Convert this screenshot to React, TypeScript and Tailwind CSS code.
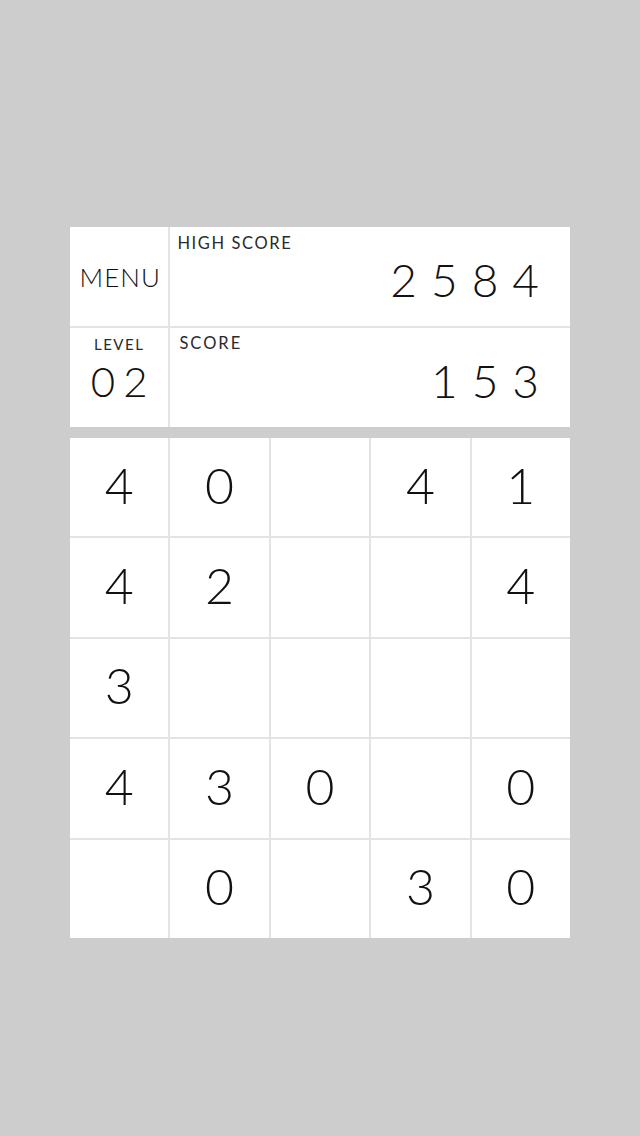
import React from 'react';

const board: (number | null)[][] = [
  [4, 0, null, 4, 1],
  [4, 2, null, null, 4],
  [3, null, null, null, null],
  [4, 3, 0, null, 0],
  [null, 0, null, 3, 0],
];

const App: React.FC = () => {
  return (
    <div className="min-h-[1136px] w-full bg-[#cdcdcd] pt-[227px] text-[#111]" style={{ fontFamily: 'Lato, "Open Sans", sans-serif' }}>
      <div className="mx-auto w-[500px]">
        {/* Score panel */}
        <div className="grid h-[200px] grid-cols-5 grid-rows-2 gap-[2px] bg-[#e4e4e4]">
          <div className="flex items-center justify-center bg-white pl-[2px] text-[26px] font-light leading-none tracking-[1px]">MENU</div>
          <div className="col-span-4 flex flex-col bg-white pl-[7px] pr-[17px] pt-[6px]">
            <div className="text-[16.5px] leading-5 tracking-[1.6px] text-[#2a2a2a]">HIGH SCORE</div>
            <div className="mt-[4px] text-right text-[46px] font-light leading-none tracking-[14px]">2584</div>
          </div>
          <div className="flex flex-col items-center bg-white pt-[6px]">
            <div className="text-[15px] leading-5 tracking-[1.5px] text-[#2a2a2a]">LEVEL</div>
            <div className="mt-[6px] pl-[8px] text-[42px] font-light leading-none tracking-[8px]">02</div>
          </div>
          <div className="col-span-4 flex flex-col bg-white pl-[9px] pr-[17px] pt-[5px]">
            <div className="text-[16.5px] leading-5 tracking-[2px] text-[#2a2a2a]">SCORE</div>
            <div className="mt-[5px] text-right text-[46px] font-light leading-none tracking-[14px]">153</div>
          </div>
        </div>

        {/* Board */}
        <div className="mt-[11px] grid h-[500px] grid-cols-5 grid-rows-5 gap-[2px] bg-[#e4e4e4]">
          {board.flat().map((v, i) => (
            <div key={i} className="flex items-center justify-center bg-white pb-[5px] text-[50px] font-light leading-none">
              {v !== null ? v : ''}
            </div>
          ))}
        </div>
      </div>
    </div>
  );
};

export default App;
